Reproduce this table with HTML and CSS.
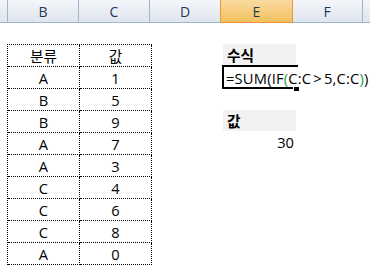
FILE: index.html
```html
<!DOCTYPE html>
<html lang="ko">
<head>
<meta charset="utf-8">
<title>시트</title>
<link rel="stylesheet" href="styles.css">
</head>
<body>
<div class="colheads">
  <div class="corner"></div>
  <div class="colhead">B</div>
  <div class="colhead">C</div>
  <div class="colhead">D</div>
  <div class="colhead active">E</div>
  <div class="colhead">F</div>
  <div class="colrest"></div>
</div>
<div class="sheet">
  <div class="datatable">
    <div class="cell">분류</div><div class="cell">값</div>
    <div class="cell">A</div><div class="cell">1</div>
    <div class="cell">B</div><div class="cell">5</div>
    <div class="cell">B</div><div class="cell">9</div>
    <div class="cell">A</div><div class="cell">7</div>
    <div class="cell">A</div><div class="cell">3</div>
    <div class="cell">C</div><div class="cell">4</div>
    <div class="cell">C</div><div class="cell">6</div>
    <div class="cell">C</div><div class="cell">8</div>
    <div class="cell">A</div><div class="cell">0</div>
  </div>
  <div class="colE">
    <div class="label">수식</div>
    <div class="selected">
      <span class="formula">=SUM(IF<span class="paren">(</span>C:C<span class="op">&gt;</span>5,C:C<span class="paren">)</span>)</span>
      <span class="handle"></span>
    </div>
    <div class="spacer"></div>
    <div class="label">값</div>
    <div class="result">30</div>
  </div>
</div>
</body>
</html>
```

FILE: styles.css
```css
html, body {
  margin: 0;
  padding: 0;
  background: #ffffff;
}

body {
  width: 370px;
  height: 271px;
  overflow: hidden;
  font-family: "Open Sans", "Noto Sans CJK KR", sans-serif;
  font-size: 14.7px;
  color: #000000;
}

/* column header strip */
.colheads {
  display: flex;
  height: 22px;
  border-top: 1px solid #a7bbd3;
  border-bottom: 1px solid #9eb6ce;
  box-sizing: content-box;
  margin-top: -1px;
  background: linear-gradient(#f4f6fa, #dfe5ee);
}

.corner {
  width: 7px;
  flex: none;
  border-right: 1px solid #9eb6ce;
}

.colhead {
  width: 71px;
  flex: none;
  border-right: 1px solid #9eb6ce;
  display: flex;
  align-items: center;
  justify-content: center;
  color: #1f3a57;
  font-size: 14px;
  line-height: 1;
  padding-top: 1px;
  box-sizing: border-box;
}

.colhead.active {
  width: 73px;
  margin-left: -1px;
  margin-right: -1px;
  margin-bottom: -1px;
  border: 1px solid #f29436;
  border-top: none;
  background: linear-gradient(#f9da9f, #f1c15f);
  position: relative;
}

.colrest {
  flex: 1;
}

/* worksheet body */
.sheet {
  display: flex;
  align-items: flex-start;
}

.datatable {
  margin-left: 7px;
  margin-top: 21px;
  display: grid;
  grid-template-columns: 72px 72px;
  grid-auto-rows: 22px;
  border-top: 1px dotted #000000;
  border-left: 1px dotted #000000;
}

.cell {
  border-right: 1px dotted #000000;
  border-bottom: 1px dotted #000000;
  display: flex;
  align-items: center;
  justify-content: center;
  padding-top: 1px;
  box-sizing: border-box;
  line-height: 1;
}

.colE {
  margin-left: 71px;
  margin-top: 21px;
  width: 73px;
  display: flex;
  flex-direction: column;
}

.label {
  height: 21px;
  background: #f2f2f2;
  font-weight: bold;
  padding-left: 4px;
  display: flex;
  align-items: center;
  line-height: 1;
  padding-top: 2px;
  box-sizing: border-box;
}

.selected {
  position: relative;
  height: 24px;
  margin-left: -1px;
  border-top: 2px solid #000000;
  border-left: 2px solid #000000;
  box-sizing: border-box;
  display: flex;
  align-items: center;
  white-space: nowrap;
  line-height: 1;
}

.selected::after {
  content: "";
  position: absolute;
  left: -2px;
  bottom: 0;
  width: 71px;
  height: 2px;
  background: #000000;
}

.selected::before {
  content: "";
  position: absolute;
  right: -2px;
  top: -2px;
  width: 2px;
  height: 2px;
  background: #000000;
}

.formula {
  padding-left: 2px;
  padding-top: 1px;
  letter-spacing: 0.2px;
}

.op {
  margin: 0 2px;
}

.paren {
  color: #1f9b3a;
}

.handle {
  position: absolute;
  left: 69px;
  bottom: -2px;
  width: 5px;
  height: 4px;
  background: #000000;
  border-left: 1px solid #ffffff;
}

.spacer {
  height: 21px;
}

.result {
  height: 22px;
  display: flex;
  align-items: center;
  justify-content: flex-end;
  padding-right: 2px;
  line-height: 1;
  padding-top: 1px;
  box-sizing: border-box;
}
```
